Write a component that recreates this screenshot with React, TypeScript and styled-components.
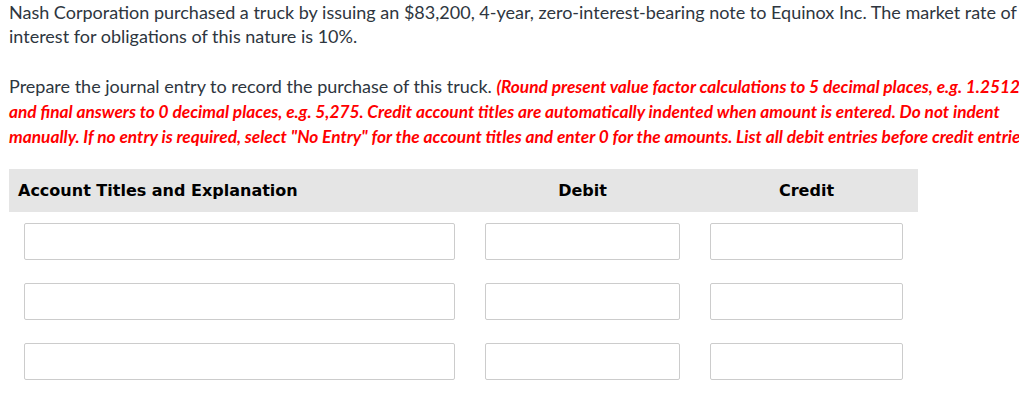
import styled, { createGlobalStyle } from 'styled-components';

const GlobalStyle = createGlobalStyle`
  html, body {
    margin: 0;
    padding: 0;
    background: #ffffff;
    overflow: hidden;
  }
`;

const rows = [0, 1, 2];

const App = () => {
  return (
    <>
      <GlobalStyle />
      <Page>
        <Question>
          <Paragraph>
            Nash Corporation purchased a truck by issuing an $83,200, 4-year, zero-interest-bearing
            note to Equinox Inc. The market rate of interest for obligations of this nature is 10%.
          </Paragraph>
          <Paragraph>
            Prepare the journal entry to record the purchase of this truck.{' '}
            <Instruction>
              (Round present value factor calculations to 5 decimal places, e.g. 1.25124 and final
              answers to 0 decimal places, e.g. 5,275. Credit account titles are automatically
              indented when amount is entered. Do not indent manually. If no entry is required,
              select "No Entry" for the account titles and enter 0 for the amounts. List all debit
              entries before credit entries.)
            </Instruction>
          </Paragraph>
        </Question>

        <Journal>
          <HeaderRow>
            <HeaderCell>Account Titles and Explanation</HeaderCell>
            <HeaderCell $center>Debit</HeaderCell>
            <HeaderCell $center>Credit</HeaderCell>
          </HeaderRow>
          {rows.map((r) => (
            <EntryRow key={r}>
              <InputCell>
                <Field type="text" />
              </InputCell>
              <InputCell>
                <Field type="text" />
              </InputCell>
              <InputCell>
                <Field type="text" />
              </InputCell>
            </EntryRow>
          ))}
        </Journal>
      </Page>
    </>
  );
};

export default App;

const Page = styled.div`
  padding: 0 0 0 9px;
  width: 1040px;
`;

const Question = styled.div`
  font-family: Lato, 'Open Sans', sans-serif;
  font-size: 18px;
  line-height: 24px;
  color: #2e3640;
`;

const Paragraph = styled.p`
  margin: 0 0 26px;
  padding-top: 0;
`;

const Instruction = styled.span`
  color: #ff0000;
  font-weight: 700;
  font-style: italic;
  font-size: 17.3px;
`;

const Journal = styled.div`
  width: 909px;
  margin-top: -6px;
`;

const HeaderRow = styled.div`
  display: grid;
  grid-template-columns: 461px 225px 223px;
  background: #e5e5e5;
  height: 43px;
  align-items: center;
`;

const HeaderCell = styled.div<{ $center?: boolean }>`
  font-family: 'DejaVu Sans', Verdana, sans-serif;
  font-weight: 700;
  font-size: 16px;
  color: #000;
  padding-left: ${(p) => (p.$center ? '0' : '9px')};
  text-align: ${(p) => (p.$center ? 'center' : 'left')};
`;

const EntryRow = styled.div`
  display: grid;
  grid-template-columns: 461px 225px 223px;
  padding-top: 11px;
  height: 49px;
`;

const InputCell = styled.div`
  padding: 0 15px;
`;

const Field = styled.input`
  box-sizing: border-box;
  width: 100%;
  height: 37px;
  border: 1px solid #cccccc;
  border-radius: 2px;
  background: #fff;
  margin: 0;
  padding: 0 6px;
  font-family: Lato, sans-serif;
  font-size: 16px;
  outline: none;
`;
